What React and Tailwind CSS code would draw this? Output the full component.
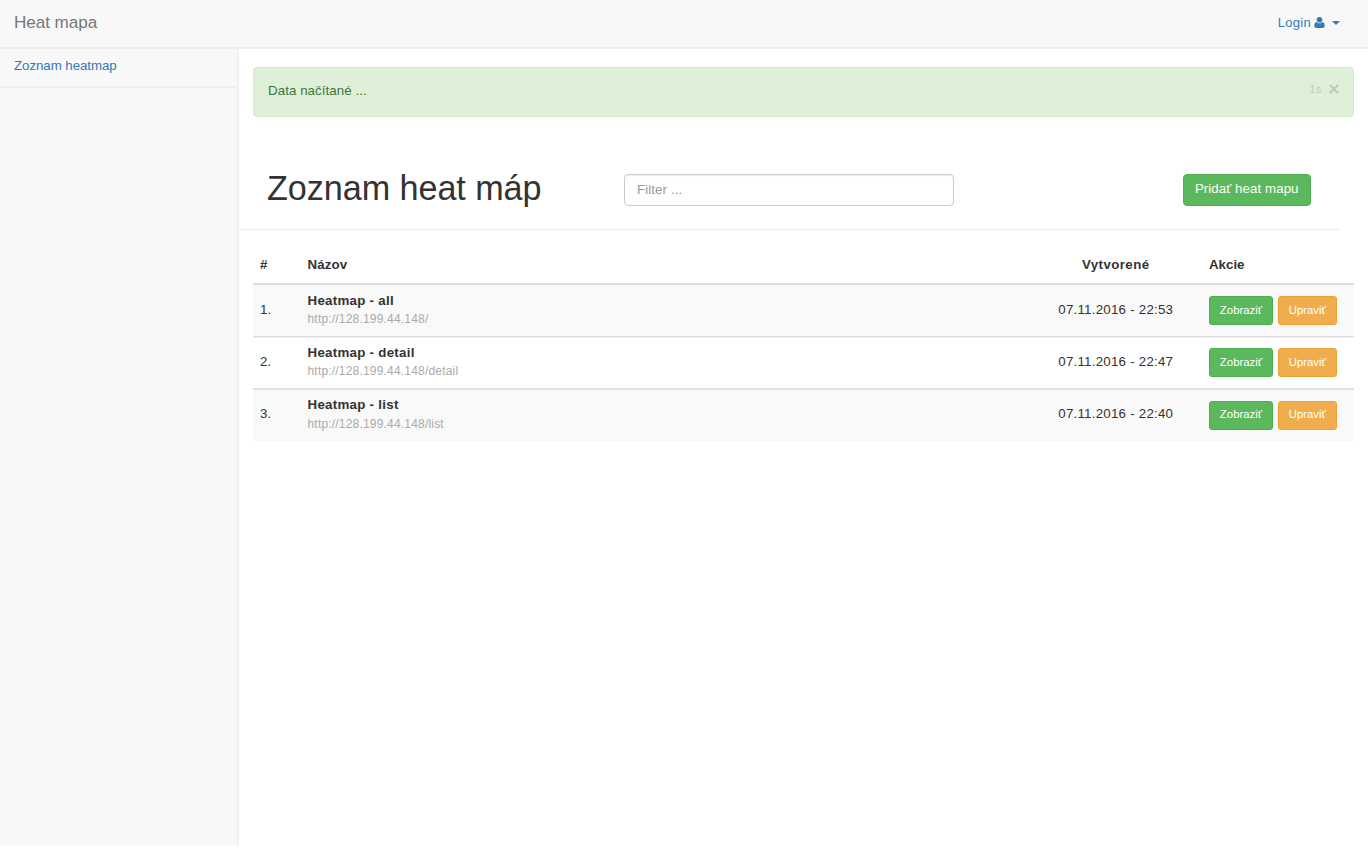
import React from "react";

const rows = [
  { id: 1, name: "Heatmap - all", url: "http://128.199.44.148/", date: "07.11.2016 - 22:53" },
  { id: 2, name: "Heatmap - detail", url: "http://128.199.44.148/detail", date: "07.11.2016 - 22:47" },
  { id: 3, name: "Heatmap - list", url: "http://128.199.44.148/list", date: "07.11.2016 - 22:40" },
];

const rowStyles = [
  "h-[52px]",
  "h-[52px] shadow-[inset_0_1px_0_#f0f0f0]",
  "h-[53px] shadow-[inset_0_1px_0_#e4e4e4]",
];

const buttonOffsets = ["pt-[11px]", "pt-[11px]", "pt-[12px]"];
const labelOffsets = ["pb-0", "pb-0", "pb-[2px]"];

const grid = "grid grid-cols-[47.5px_715px_186.5px_1fr] pl-[7.5px]";

function Header() {
  return (
    <header className="flex h-[49px] items-start justify-between border-b-2 border-[#efefef] bg-[#f8f8f8] pl-[14px] pr-7">
      <a className="pt-[13px] text-[17.1px] leading-5 tracking-[-0.05px] text-[#777777]">Heat mapa</a>
      <a className="flex items-center pt-[13px] text-[13px] leading-5 tracking-[0.3px] text-[#337ab7]">
        Login
        <svg className="mb-[2px] ml-[3px] h-[11px] w-[11px]" viewBox="0 0 11 11" fill="currentColor">
          <circle cx="5.5" cy="2.8" r="2.8" />
          <path d="M2.5 4.9C.9 5.2.3 6.7.3 8.7c0 1.4.8 2.2 2 2.2h6.4c1.2 0 2-.8 2-2.2 0-2-.6-3.5-2.2-3.8-.8.8-1.800 1.300-3 1.300s-2.200-.5-3-1.300z" />
        </svg>
        <svg className="ml-[7px] h-1 w-2" viewBox="0 0 8 4" fill="currentColor">
          <path d="M0 0h8L4 4z" />
        </svg>
      </a>
    </header>
  );
}

function Alert() {
  return (
    <div className="ml-[13.5px] mr-[14px] mt-[18.4px] flex h-[49.6px] items-start justify-between rounded-[4px] border border-[#d6e9c6] bg-[#dff0d8] pl-[14.5px] pr-[14px]">
      <span className="pt-[13px] text-[13.3px] leading-5 tracking-[0.07px] text-[#3c763d]">Data načítané ...</span>
      <span className="flex items-center pt-[11px]">
        <span className="text-[11.4px] leading-5 tracking-[0.2px] text-[#c3c9c1]">1s</span>
        <svg className="ml-[7.3px] h-[10px] w-[10px]" viewBox="0 0 10 10" stroke="#bbcdb5" strokeWidth="2.1">
          <path d="M.8.8l8.4 8.4M9.2.8L.8 9.2" />
        </svg>
      </span>
    </div>
  );
}

function Row({ row, index }) {
  return (
    <div className={`${grid} border-t border-[#dddddd] ${index % 2 === 0 ? "bg-[#f9f9f9]" : ""} ${rowStyles[index]}`}>
      <div className="pt-[15px] text-[13.3px] leading-5 tracking-[0.2px]">{row.id}.</div>
      <div className="pt-[6px]">
        <div className="text-[13.3px] font-bold leading-[19px] tracking-[0.28px]">{row.name}</div>
        <div className={`text-[12px] tracking-[0.19px] text-[#aaaaaa] ${index === 2 ? "leading-[20px]" : "leading-[18px]"}`}>{row.url}</div>
      </div>
      <div className="pt-[15px] text-center text-[13.3px] leading-5 tracking-[0.24px]">{row.date}</div>
      <div className={`flex items-start gap-[4.5px] text-[11.4px] leading-[25px] text-white ${buttonOffsets[index]}`}>
        <button className={`h-[29px] w-16 rounded-[3px] border border-[#4cae4c] bg-[#5cb85c] ${labelOffsets[index]}`}>Zobraziť</button>
        <button className={`h-[29px] w-[59.5px] rounded-[3px] border border-[#eea236] bg-[#f0ad4e] ${labelOffsets[index]}`}>Upraviť</button>
      </div>
    </div>
  );
}

export default function App() {
  return (
    <div className="h-[855px] overflow-hidden bg-white font-['Liberation_Sans',Arial,sans-serif] text-[#333333]">
      <Header />
      <div className="flex h-[796px]">
        <aside className="w-[239px] shrink-0 border-r-2 border-[#f0f0f0] bg-[#f8f8f8]">
          <div className="h-[39px] border-b-2 border-[#efefef] pl-[14px] pt-[7px] text-[13.3px] leading-5 tracking-[-0.06px] text-[#337ab7]">
            Zoznam heatmap
          </div>
        </aside>
        <main className="min-w-0 flex-1">
          <Alert />
          <div className="mr-7 mt-[38px] flex h-[75px] items-start border-b border-[#eeeeee] pl-7">
            <h1 className="w-[357px] pt-[12px] text-[34.2px] leading-[42px] tracking-[-0.07px]">Zoznam heat máp</h1>
            <input
              className="mt-[19px] h-[32px] w-[330px] rounded-[4px] border border-[#cccccc] bg-white px-[12px] text-[13.3px] tracking-[0.1px] shadow-[inset_0_1px_1px_rgba(0,0,0,0.075)] outline-none placeholder:text-[#999999]"
              placeholder="Filter ..."
            />
            <button className="ml-auto mr-[29px] mt-[19px] h-[32px] w-[128.5px] rounded-[4px] border border-[#4cae4c] bg-[#5cb85c] pb-[2px] text-[13.3px] leading-5 tracking-[0.07px] text-white">
              Pridať heat mapu
            </button>
          </div>
          <div className="ml-[13.5px] mr-[14px] mt-[19px] text-[13.3px]">
            <div className={`${grid} h-[35px] border-b border-[#dddddd] pt-[6px] font-bold leading-5`}>
              <div>#</div>
              <div className="tracking-[0.15px]">Názov</div>
              <div className="text-center tracking-[0.42px]">Vytvorené</div>
              <div>Akcie</div>
            </div>
            {rows.map((row, index) => (
              <Row key={row.id} row={row} index={index} />
            ))}
          </div>
        </main>
      </div>
    </div>
  );
}
